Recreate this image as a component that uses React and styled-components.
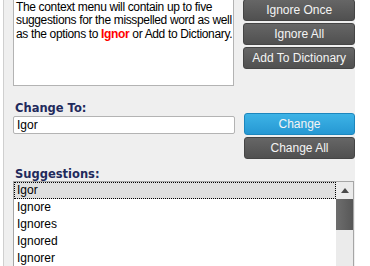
import React from 'react';
import styled, { createGlobalStyle } from 'styled-components';

const Global = createGlobalStyle`
  html, body {
    margin: 0;
    padding: 0;
    background: #ffffff;
    overflow: hidden;
  }
`;

const Page = styled.div`
  width: 370px;
  height: 266px;
  overflow: hidden;
  background: #ffffff;
`;

const Panel = styled.div`
  margin: -4px 0 0 3px;
  width: 352px;
  height: 290px;
  padding-left: 9px;
  box-sizing: border-box;
  border-left: 1px solid #cfcfcf;
  background: #efefef;
  font-family: 'Liberation Sans', Arial, sans-serif;
  font-size: 12px;
  color: #000;
`;

const Row = styled.div`
  display: flex;
  gap: 9px;
  margin-top: ${p => p.$top || 0}px;
`;

const Column = styled.div`
  display: flex;
  flex-direction: column;
  width: ${p => p.$width}px;
  padding-top: ${p => p.$pad || 0}px;
  margin-top: ${p => p.$top || 0}px;
`;

const TextBox = styled.div`
  width: 222px;
  height: 90px;
  box-sizing: border-box;
  border: 1px solid #b3b3b3;
  background: #ffffff;
  padding: 4px 2px;
  line-height: 13.3px;
  letter-spacing: -0.35px;
  white-space: nowrap;
  overflow: hidden;
`;

const Misspelled = styled.span`
  color: #ff0000;
  font-weight: bold;
`;

const Button = styled.div`
  height: 22px;
  margin-bottom: 2px;
  border-radius: 3px;
  box-sizing: border-box;
  display: flex;
  align-items: center;
  justify-content: center;
  color: #f4f4f4;
  font-size: 12px;
  border: 1px solid ${p => (p.$primary ? '#1c86bd' : '#454545')};
  background: ${p =>
    p.$primary
      ? 'linear-gradient(#3db3e6, #2698d3)'
      : 'linear-gradient(#666666, #505050)'};
`;

const Label = styled.div`
  font-family: 'DejaVu Sans', Verdana, sans-serif;
  font-weight: bold;
  font-size: 11.5px;
  line-height: 14px;
  color: #1f2a5c;
  padding-left: 2px;
`;

const Input = styled.div`
  margin-top: 1px;
  width: 222px;
  height: 18px;
  box-sizing: border-box;
  border: 1px solid #b3b3b3;
  border-radius: 2px;
  background: #ffffff;
  padding-left: 3px;
  line-height: 16px;
`;

const ListBox = styled.div`
  width: 341px;
  height: 100px;
  box-sizing: border-box;
  border: 1px solid #a6a6a6;
  background: #ffffff;
  display: flex;
`;

const Items = styled.div`
  flex: 1;
`;

const Item = styled.div`
  height: 17px;
  line-height: 15px;
  padding-left: 2px;
  box-sizing: border-box;
  border: 1px ${p => (p.$selected ? 'dotted #000' : 'solid transparent')};
  background: ${p => (p.$selected ? '#dfdfdf' : 'transparent')};
`;

const ScrollBar = styled.div`
  width: 17px;
  background: #ebebeb;
  display: flex;
  flex-direction: column;
`;

const Arrow = styled.div`
  height: 17px;
  display: flex;
  align-items: center;
  justify-content: center;
`;

const Thumb = styled.div`
  height: 31px;
  background: linear-gradient(to right, #6e6e6e, #575757);
`;

const suggestions = ['Igor', 'Ignore', 'Ignores', 'Ignored', 'Ignorer'];

export default function App() {
  return (
    <Page>
      <Global />
      <Panel>
        <Row>
          <TextBox>
            The context menu will contain up to five
            <br />
            suggestions for the misspelled word as well
            <br />
            as the options to <Misspelled>Ignor</Misspelled> or Add to Dictionary.
          </TextBox>
          <Column $width={112} $pad={3}>
            <Button>Ignore Once</Button>
            <Button>Ignore All</Button>
            <Button>Add To Dictionary</Button>
          </Column>
        </Row>
        <Row $top={15}>
          <Column $width={222}>
            <Label>Change To:</Label>
            <Input>Igor</Input>
          </Column>
          <Column $width={112} $pad={12}>
            <Button $primary>Change</Button>
            <Button>Change All</Button>
          </Column>
        </Row>
        <Column $width={341} $top={6}>
          <Label>Suggestions:</Label>
          <ListBox>
            <Items>
              {suggestions.map((s, i) => (
                <Item key={s} $selected={i === 0}>
                  {s}
                </Item>
              ))}
            </Items>
            <ScrollBar>
              <Arrow>
                <svg width="8" height="5" viewBox="0 0 8 5">
                  <path d="M0 5 L4 0 L8 5 Z" fill="#4a4a4a" />
                </svg>
              </Arrow>
              <Thumb />
            </ScrollBar>
          </ListBox>
        </Column>
      </Panel>
    </Page>
  );
}
